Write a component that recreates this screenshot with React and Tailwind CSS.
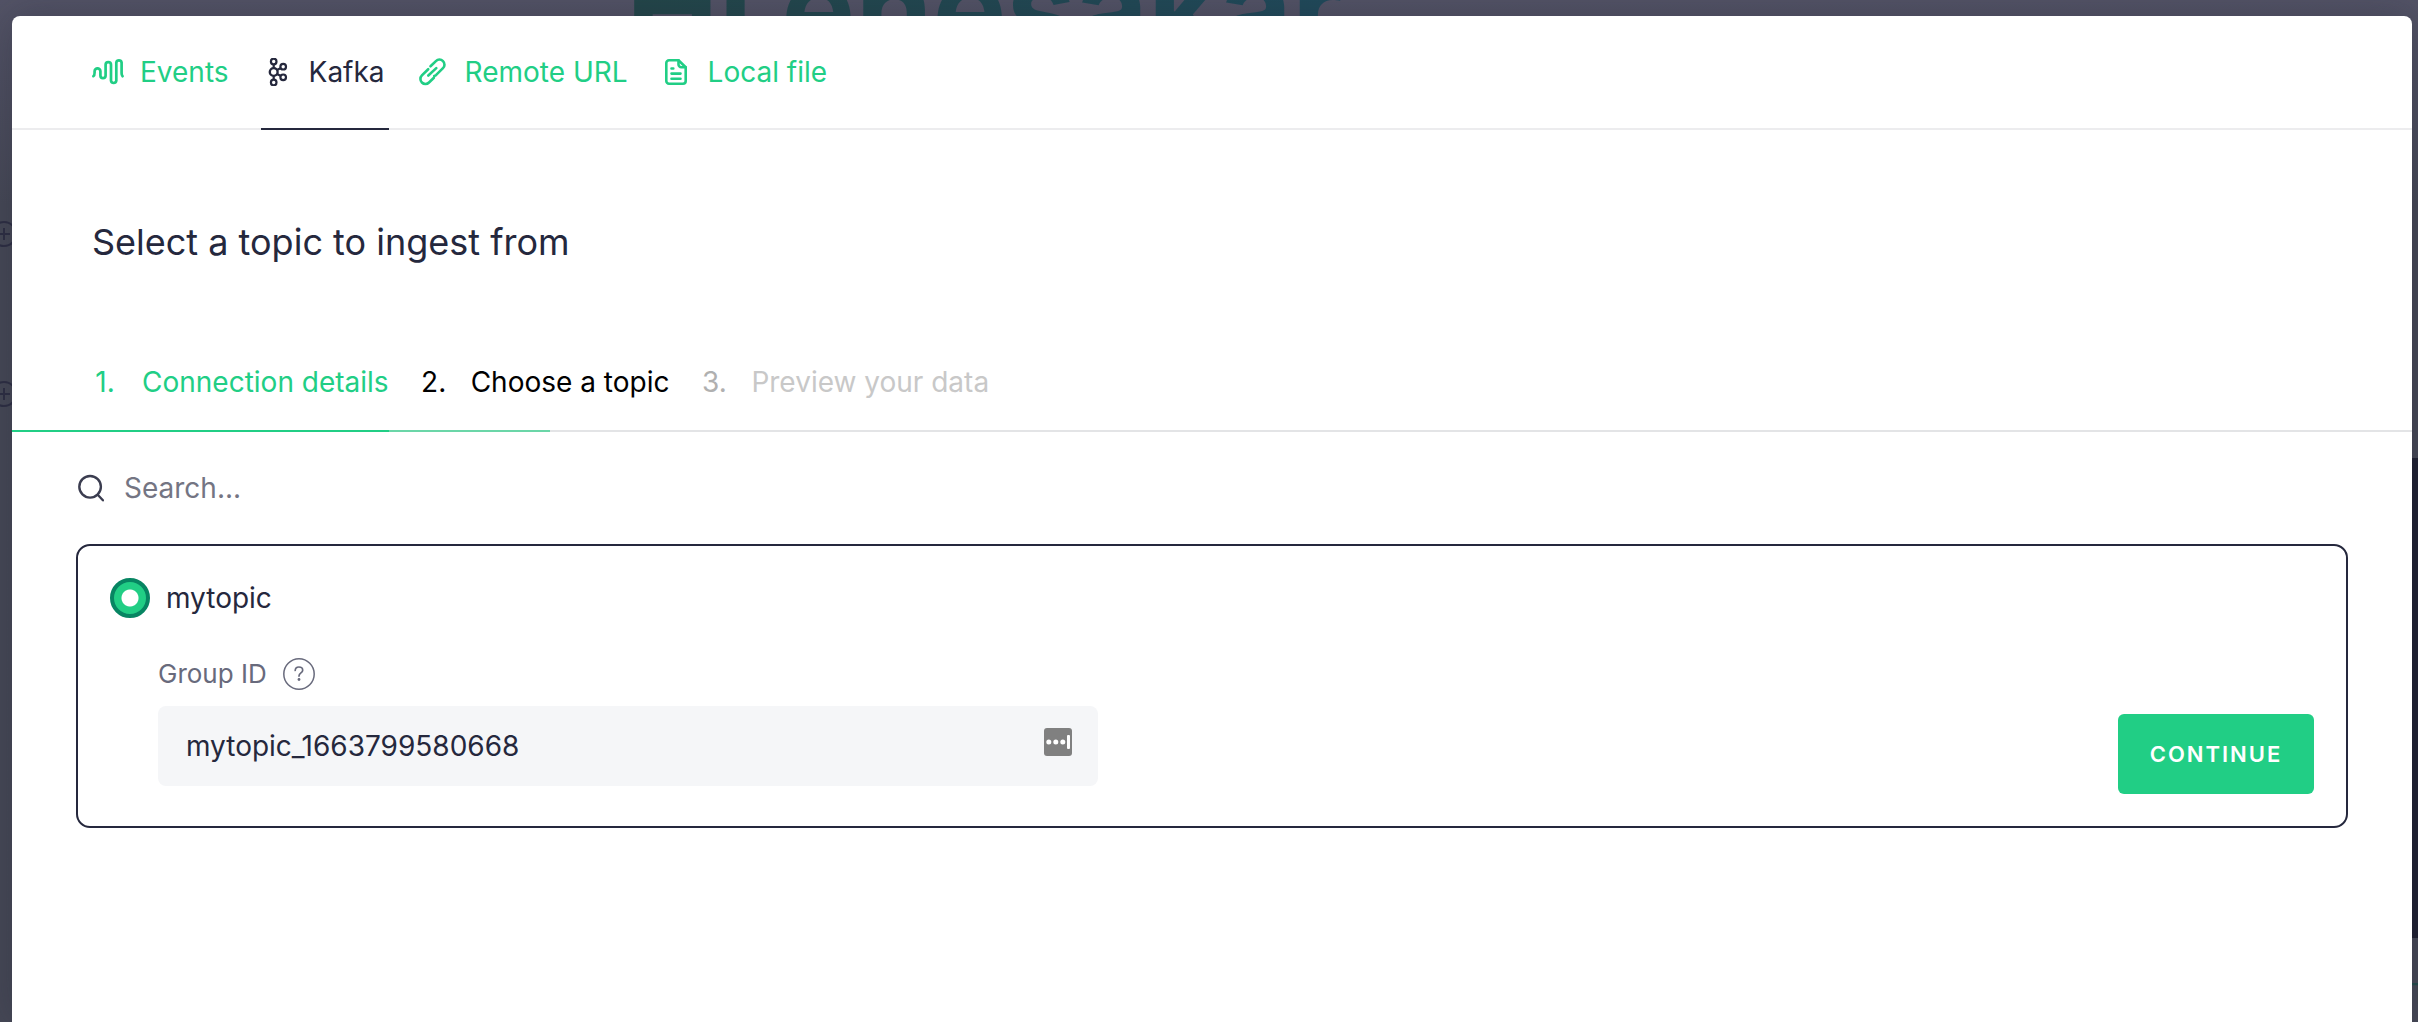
import { useState } from 'react'

const TABS = [
  { id: 'events', label: 'Events', Icon: EventsIcon },
  { id: 'kafka', label: 'Kafka', Icon: KafkaIcon },
  { id: 'remote', label: 'Remote URL', Icon: LinkIcon },
  { id: 'local', label: 'Local file', Icon: FileIcon },
]

function EventsIcon() {
  return (
    <svg viewBox="0 0 32 28" className="w-8 h-7" fill="none" stroke="currentColor" strokeWidth="2.7" strokeLinecap="round" aria-hidden="true">
      <path d="M1.4 18.2C2.4 17.6 2.6 16.5 2.6 14.5V13.2a2.9 2.9 0 0 1 5.8 0v4.3a2.6 2.6 0 0 0 5.2 0V6.8a2.7 2.7 0 0 1 5.4 0v16a2.7 2.7 0 0 0 5.3 0V4.6a2.7 2.7 0 0 1 5.3 0v10.6c0 1.3.2 2.2.9 3" />
    </svg>
  )
}

function KafkaIcon() {
  return (
    <svg viewBox="0 0 32 28" className="w-8 h-7" fill="none" stroke="currentColor" strokeWidth="2.2" aria-hidden="true">
      <circle cx="12.7" cy="3.5" r="2.8" />
      <circle cx="12.7" cy="14" r="3.9" strokeWidth="2.4" />
      <circle cx="12.7" cy="24.5" r="2.8" />
      <circle cx="22.2" cy="8.7" r="2.8" />
      <circle cx="22.2" cy="19.3" r="2.8" />
      <path d="M12.7 6v4.2M12.7 18v4M16 12l3.9-2M16 16l3.9 2" />
    </svg>
  )
}

function LinkIcon() {
  return (
    <svg viewBox="0 0 32 28" className="w-8 h-7" fill="none" stroke="currentColor" strokeWidth="2.6" strokeLinecap="round" aria-hidden="true">
      <path d="M13.5 8.3l5.4-5.2a5 5 0 0 1 7.1 7.1l-6.8 6.7a4.5 4.5 0 0 1-2 1" />
      <path d="M16.9 19.7l-4.9 4.8a5 5 0 0 1-7.1-7.1l6.3-6.2" />
      <path d="M11.3 17.5l8-7.4" />
    </svg>
  )
}

function FileIcon() {
  return (
    <svg viewBox="0 0 32 28" className="w-8 h-7" fill="none" stroke="currentColor" strokeWidth="2.6" strokeLinecap="round" strokeLinejoin="round" aria-hidden="true">
      <path d="M18.5 2.3H9A2.7 2.7 0 0 0 6.3 5v18A2.7 2.7 0 0 0 9 25.7h14a2.7 2.7 0 0 0 2.7-2.7V9.2z" />
      <path d="M18.5 2.3v4.2a2.7 2.7 0 0 0 2.7 2.7h4.5M11.5 10.5h1.8M11.5 15.6h9M11.5 20.7h9" />
    </svg>
  )
}

function PlusIcon({ className }) {
  return (
    <svg viewBox="0 0 26 26" className={`size-[26px] ${className}`} fill="none" stroke="#2d2e43" strokeWidth="2">
      <circle cx="13" cy="13" r="12" />
      <path d="M13 7v12M7 13h12" />
    </svg>
  )
}

function Backdrop() {
  return (
    <div className="absolute inset-0 overflow-hidden bg-linear-to-b from-[#535366] to-[#464856] to-20%" aria-hidden="true">
      <p className="absolute -top-[60px] left-[626px] text-[124px] leading-[136px] font-bold bg-linear-to-r from-[#234649] to-[#204a5b] bg-clip-text text-transparent">Hi enesakar</p>
      <PlusIcon className="absolute top-[221px] -left-[9px]" />
      <PlusIcon className="absolute top-[381px] -left-[9px]" />
      <div className="absolute top-[458px] right-0 h-[480px] w-10 bg-[#1f2032]" />
      <span className="absolute top-[976px] -right-[10px] text-[28px] leading-9 text-[#234b4b]">T</span>
    </div>
  )
}

function Tabs({ active, onChange }) {
  return (
    <nav className="flex gap-7 px-20 border-b-2 border-[#ececee]">
      {TABS.map(({ id, label, Icon }) => (
        <button
          key={id}
          type="button"
          onClick={() => onChange(id)}
          className={`flex items-center gap-4 h-[114px] -mb-[2px] pr-1 border-b-2 cursor-pointer ${
            active === id ? 'text-[#25283d] border-[#25283d]' : 'text-[#21ce85] border-transparent'
          }`}
        >
          <Icon />
          {label}
        </button>
      ))}
    </nav>
  )
}

function Steps() {
  return (
    <div>
      <ol className="flex gap-8 px-20 pb-7">
        <li className="flex gap-6 text-[#21ce85]"><span className="w-[26px] text-center">1.</span>Connection details</li>
        <li className="flex gap-6 text-black"><span className="w-[26px] text-center">2.</span>Choose a topic</li>
        <li className="flex gap-6 text-[#c8c8c8]"><span className="w-[26px] text-center text-[#b0b0b0]">3.</span>Preview your data</li>
      </ol>
      <div className="flex h-[2px] bg-[#e3e4e6]">
        <div className="w-[377px] bg-[#21ce85]" />
        <div className="w-[161px] bg-[#6bd6a8]" />
      </div>
    </div>
  )
}

function TopicCard({ groupId, setGroupId }) {
  return (
    <div className="flex items-end justify-between mx-16 p-8 border-2 border-[#25283d] rounded-[14px]">
      <div>
        <label className="flex items-center gap-4 h-10">
          <input
            type="radio"
            name="topic"
            defaultChecked
            className="appearance-none size-10 rounded-full border-4 border-[#078562] bg-[radial-gradient(circle,white_8px,#21ce85_9px)]"
          />
          mytopic
        </label>
        <div className="ml-12 mt-10 mb-2">
          <div className="flex items-center gap-4 h-8 text-[26px] text-[#686a7c]">
            <label htmlFor="group-id">Group ID</label>
            <button type="button" aria-label="About group ID" className="flex items-center justify-center">
              <svg viewBox="0 0 32 32" className="size-8" fill="none" stroke="currentColor" strokeWidth="1.5" strokeLinecap="round">
                <circle cx="16" cy="16" r="15.2" />
                <path d="M12.2 12.5c.1-2.2 1.6-3.5 3.7-3.5s3.8 1.3 3.8 3.2c0 2.8-3.7 2.7-3.7 5.9" strokeWidth="1.7" />
                <circle cx="16" cy="21.5" r="1.4" fill="currentColor" stroke="none" />
              </svg>
            </button>
          </div>
          <div className="flex items-center mt-4 w-[940px] h-20 pl-7 pr-[26px] rounded-lg bg-[#f5f6f8]">
            <input
              id="group-id"
              value={groupId}
              onChange={(e) => setGroupId(e.target.value)}
              className="flex-1 outline-none bg-transparent"
            />
            <svg viewBox="0 0 28 28" className="size-7 mb-2">
              <rect width="28" height="28" rx="3" fill="#808080" />
              <g fill="white">
                <circle cx="4.8" cy="14" r="2.5" />
                <circle cx="11.8" cy="14" r="2.5" />
                <circle cx="18.8" cy="14" r="2.5" />
                <rect x="23" y="7" width="3" height="14" rx="1" />
              </g>
            </svg>
          </div>
        </div>
      </div>
      <button
        type="button"
        className="w-[196px] h-20 rounded-md bg-[#21ce85] text-white text-[22px] font-semibold tracking-[2px] cursor-pointer"
      >
        CONTINUE
      </button>
    </div>
  )
}

function App() {
  const [tab, setTab] = useState('kafka')
  const [groupId, setGroupId] = useState('mytopic_1663799580668')

  return (
    <div className="relative flex h-screen overflow-hidden pt-4 pl-3 pr-[6px] font-['Inter',sans-serif] text-[28px] leading-10 text-[#25283d]">
      <Backdrop />
      <main className="relative flex-1 bg-white rounded-t-lg shadow-[0_0_40px_rgba(30,32,50,0.3)]">
        <Tabs active={tab} onChange={setTab} />
        <h1 className="px-20 pt-[88px] text-[36px] leading-12">Select a topic to ingest from</h1>
        <div className="pt-24">
          <Steps />
        </div>
        <label className="flex items-center gap-5 mx-16 h-28">
          <svg viewBox="0 0 28 28" className="size-7" fill="none" stroke="#3b3d50" strokeWidth="2.4" strokeLinecap="round" aria-label="Search">
            <circle cx="14.1" cy="12.8" r="10.8" />
            <path d="M21.7 20.8l5.2 5.5" />
          </svg>
          <input type="text" placeholder="Search..." className="flex-1 outline-none placeholder:text-[#747583]" />
        </label>
        <TopicCard groupId={groupId} setGroupId={setGroupId} />
      </main>
    </div>
  )
}

export default App
